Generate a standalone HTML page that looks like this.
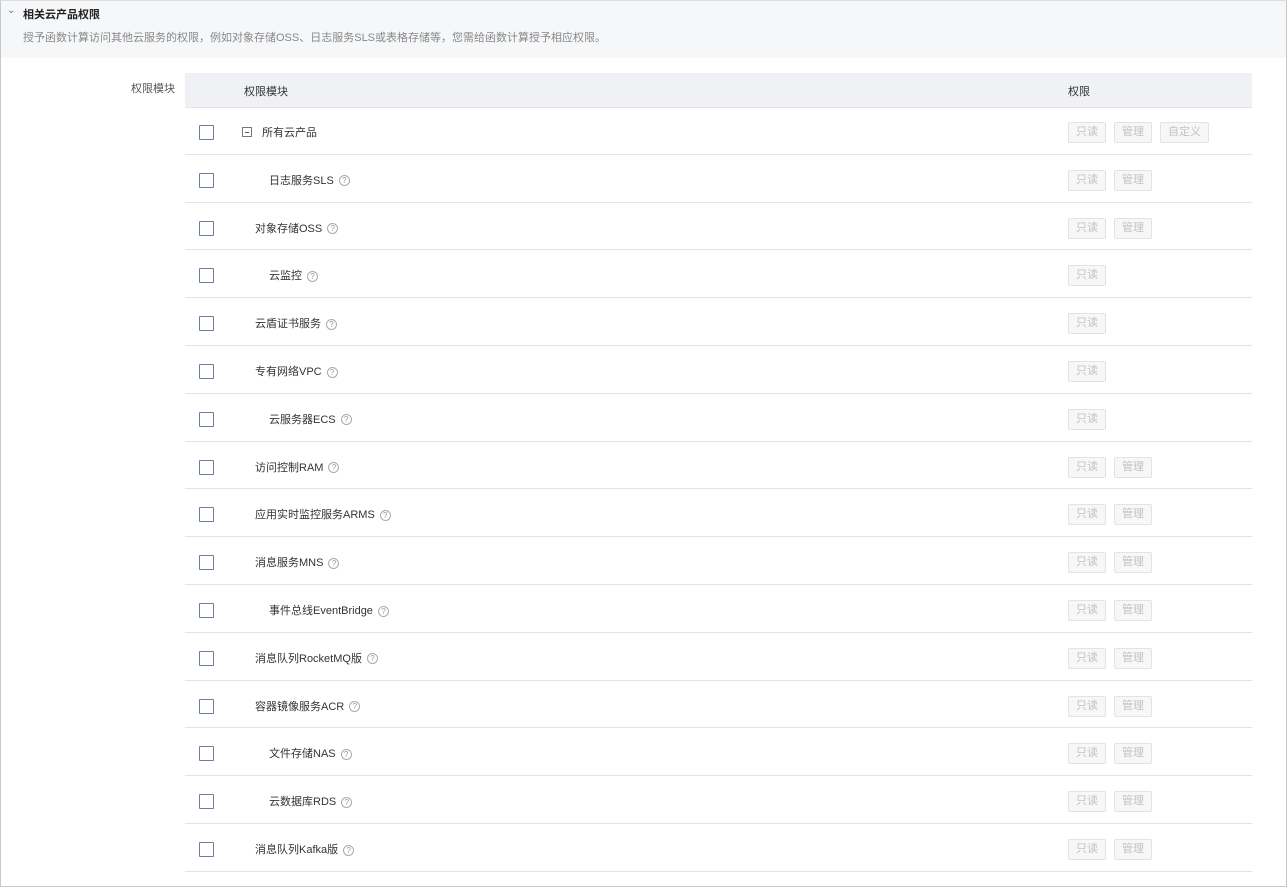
<!DOCTYPE html>
<html><head><meta charset="utf-8"><style>
*{box-sizing:border-box;margin:0;padding:0}
body{width:1287px;height:887px;background:#fff;font-family:"Liberation Sans","Noto Sans CJK SC",sans-serif;font-size:11px;color:#333;position:relative;overflow:hidden}
.frame{position:absolute;left:0;top:0;width:1287px;height:887px;border:1px solid #c8c8c8;border-top-color:#ddd}
.hd{position:absolute;left:1px;top:1px;width:1285px;height:57px;background:#f6f7f9}
.t1{position:absolute;left:22px;top:5px;font-weight:bold;color:#222}
.car{position:absolute;left:6px;top:4px;color:#777;font-size:10px}
.t2{position:absolute;left:22px;top:28px;color:#888}
.lab{position:absolute;left:131px;top:80px;color:#555}
.th{position:absolute;left:185px;top:73px;width:1067px;height:35px;background:#eff1f4;border-bottom:1px solid #e2e4e8}
.th span{position:absolute;top:10px;color:#333}
.row{position:absolute;left:185px;width:1067px;height:47.8px;border-bottom:1px solid #e4e4e4}
.cb{position:absolute;left:14px;top:18px;width:15px;height:15px;border:1px solid #6a7e9c;border-radius:1px;background:#fff}
.nm{position:absolute;top:17px;color:#333;white-space:nowrap}
.q{display:inline-block;width:11px;height:11px;border:1px solid #aaa;border-radius:50%;font-size:8px;line-height:9px;text-align:center;color:#999;margin-left:5px;vertical-align:middle}
.b{position:absolute;top:15px;height:21px;border:1px solid #e3e3e3;background:#f7f7f7;color:#c2c2c2;text-align:center;line-height:19px;border-radius:2px}
.mi{display:inline-block;width:10px;height:10px;border:1px solid #777;position:relative;vertical-align:-1px;margin-right:10px}
.mi:after{content:"";position:absolute;left:2px;top:3.5px;width:4px;height:1px;background:#555}
</style></head><body>
<div class="frame"></div>
<div class="hd"><span class="car">&#8964;</span><div class="t1">相关云产品权限</div><div class="t2">授予函数计算访问其他云服务的权限，例如对象存储OSS、日志服务SLS或表格存储等，您需给函数计算授予相应权限。</div></div>
<div class="lab">权限模块</div>
<div class="th"><span style="left:59px">权限模块</span><span style="left:883px">权限</span></div>
<div class="row" style="top:107px"><div class="cb"></div><div class="nm" style="left:57px"><span class="mi"></span>所有云产品</div><div class="b" style="left:883px;width:38px">只读</div><div class="b" style="left:929px;width:38px">管理</div><div class="b" style="left:975px;width:49px">自定义</div></div>
<div id="rows"></div>
<script>
var d=[["日志服务SLS",84,2],["对象存储OSS",70,2],["云监控",84,1],["云盾证书服务",70,1],["专有网络VPC",70,1],["云服务器ECS",84,1],["访问控制RAM",70,2],["应用实时监控服务ARMS",70,2],["消息服务MNS",70,2],["事件总线EventBridge",84,2],["消息队列RocketMQ版",70,2],["容器镜像服务ACR",70,2],["文件存储NAS",84,2],["云数据库RDS",84,2],["消息队列Kafka版",70,2]];
var h="";
d.forEach(function(r,i){var t=107+47.8*(i+1);
h+='<div class="row" style="top:'+t+'px"><div class="cb"></div><div class="nm" style="left:'+r[1]+'px">'+r[0]+'<span class="q">?</span></div><div class="b" style="left:883px;width:38px">只读</div>'+(r[2]>1?'<div class="b" style="left:929px;width:38px">管理</div>':'')+'</div>';});
document.getElementById("rows").innerHTML=h;
</script>
</body></html>
